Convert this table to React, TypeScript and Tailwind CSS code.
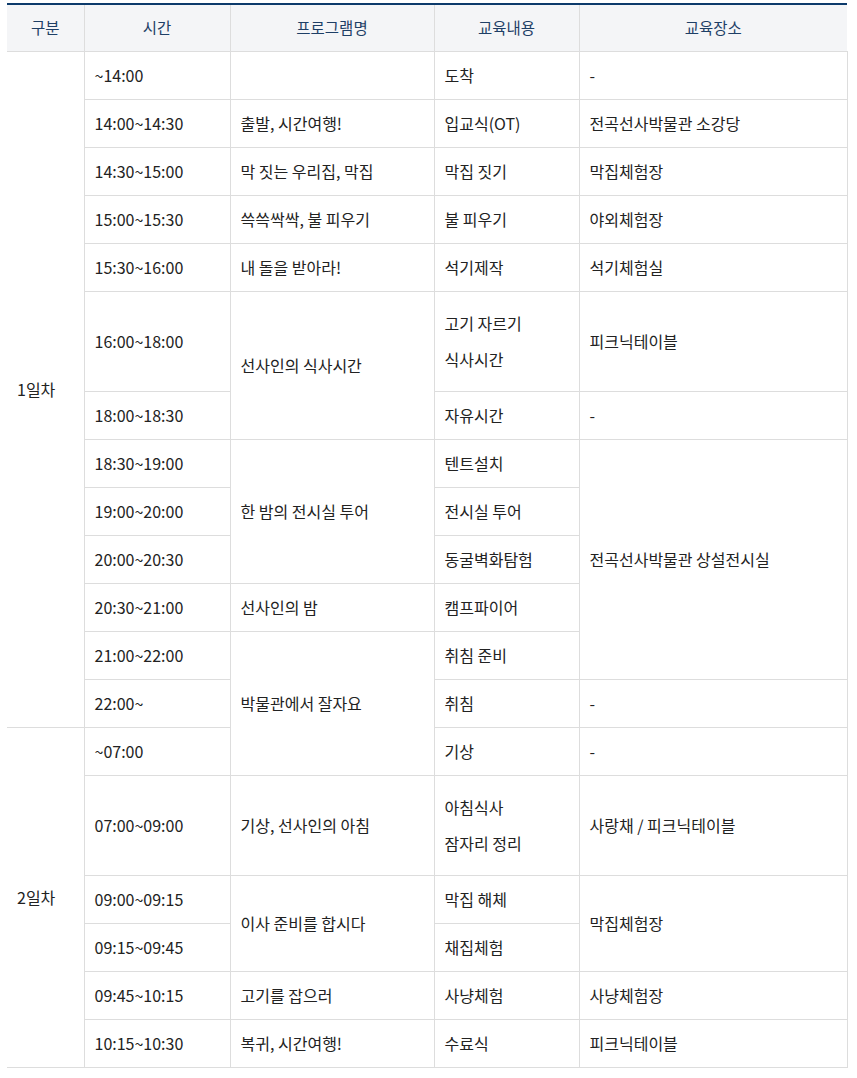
const FONT = { fontFamily: '"Noto Sans CJK KR", "Noto Sans", sans-serif' }

type Row = {
  day?: { label: string; span: number }
  time: string
  program?: { label: string; span: number }
  content: string[]
  place?: { label: string; span: number }
  tall?: boolean
}

const ROWS: Row[] = [
  { day: { label: "1일차", span: 13 }, time: "~14:00", program: { label: "", span: 1 }, content: ["도착"], place: { label: "-", span: 1 } },
  { time: "14:00~14:30", program: { label: "출발, 시간여행!", span: 1 }, content: ["입교식(OT)"], place: { label: "전곡선사박물관 소강당", span: 1 } },
  { time: "14:30~15:00", program: { label: "막 짓는 우리집, 막집", span: 1 }, content: ["막집 짓기"], place: { label: "막집체험장", span: 1 } },
  { time: "15:00~15:30", program: { label: "쓱쓱싹싹, 불 피우기", span: 1 }, content: ["불 피우기"], place: { label: "야외체험장", span: 1 } },
  { time: "15:30~16:00", program: { label: "내 돌을 받아라!", span: 1 }, content: ["석기제작"], place: { label: "석기체험실", span: 1 } },
  { time: "16:00~18:00", program: { label: "선사인의 식사시간", span: 2 }, content: ["고기 자르기", "식사시간"], place: { label: "피크닉테이블", span: 1 }, tall: true },
  { time: "18:00~18:30", content: ["자유시간"], place: { label: "-", span: 1 } },
  { time: "18:30~19:00", program: { label: "한 밤의 전시실 투어", span: 3 }, content: ["텐트설치"], place: { label: "전곡선사박물관 상설전시실", span: 5 } },
  { time: "19:00~20:00", content: ["전시실 투어"] },
  { time: "20:00~20:30", content: ["동굴벽화탐험"] },
  { time: "20:30~21:00", program: { label: "선사인의 밤", span: 1 }, content: ["캠프파이어"] },
  { time: "21:00~22:00", program: { label: "박물관에서 잘자요", span: 3 }, content: ["취침 준비"] },
  { time: "22:00~", content: ["취침"], place: { label: "-", span: 1 } },
  { day: { label: "2일차", span: 6 }, time: "~07:00", content: ["기상"], place: { label: "-", span: 1 } },
  { time: "07:00~09:00", program: { label: "기상, 선사인의 아침", span: 1 }, content: ["아침식사", "잠자리 정리"], place: { label: "사랑채 / 피크닉테이블", span: 1 }, tall: true },
  { time: "09:00~09:15", program: { label: "이사 준비를 합시다", span: 2 }, content: ["막집 해체"], place: { label: "막집체험장", span: 2 } },
  { time: "09:15~09:45", content: ["채집체험"] },
  { time: "09:45~10:15", program: { label: "고기를 잡으러", span: 1 }, content: ["사냥체험"], place: { label: "사냥체험장", span: 1 } },
  { time: "10:15~10:30", program: { label: "복귀, 시간여행!", span: 1 }, content: ["수료식"], place: { label: "피크닉테이블", span: 1 } },
]

const HEADERS = ["구분", "시간", "프로그램명", "교육내용", "교육장소"]
const WIDTHS = ["w-[77px]", "w-[146px]", "w-[204px]", "w-[145px]", "w-[268px]"]

const td = "border-r border-b border-[#dddddd] pl-[10px] pr-2 align-middle text-left"

export default function App() {
  return (
    <div className="bg-white min-h-[1078px] pl-[7px] pt-[3px]" style={FONT}>
      <table className="w-[840px] border-collapse table-fixed border-t-2 border-[#0c3a6b] text-[16px] text-[#222222]">
        <colgroup>
          {WIDTHS.map((w) => <col key={w} className={w} />)}
        </colgroup>
        <thead>
          <tr className="h-[47px] bg-[#f4f5f7]">
            {HEADERS.map((h, i) => (
              <th key={h}
                className={"border-b border-[#dddddd] font-normal text-center text-[15.5px] text-[#1e3f66] " + (i === 0 ? "" : "border-l")}
              >{h}</th>
            ))}
          </tr>
        </thead>
        <tbody>
          {ROWS.map((r) => (
            <tr key={r.time} className={r.tall ? "h-[100px]" : "h-[48px]"}>
              {r.day && <td rowSpan={r.day.span} className={td}>{r.day.label}</td>}
              <td className={td}>{r.time}</td>
              {r.program && <td rowSpan={r.program.span} className={td}>{r.program.label}</td>}
              <td className={td}>
                <div className="flex flex-col gap-[12px]">
                  {r.content.map((c) => <p key={c} className="leading-6">{c}</p>)}
                </div>
              </td>
              {r.place && <td rowSpan={r.place.span} className={td}>{r.place.label}</td>}
            </tr>
          ))}
        </tbody>
      </table>
    </div>
  )
}
